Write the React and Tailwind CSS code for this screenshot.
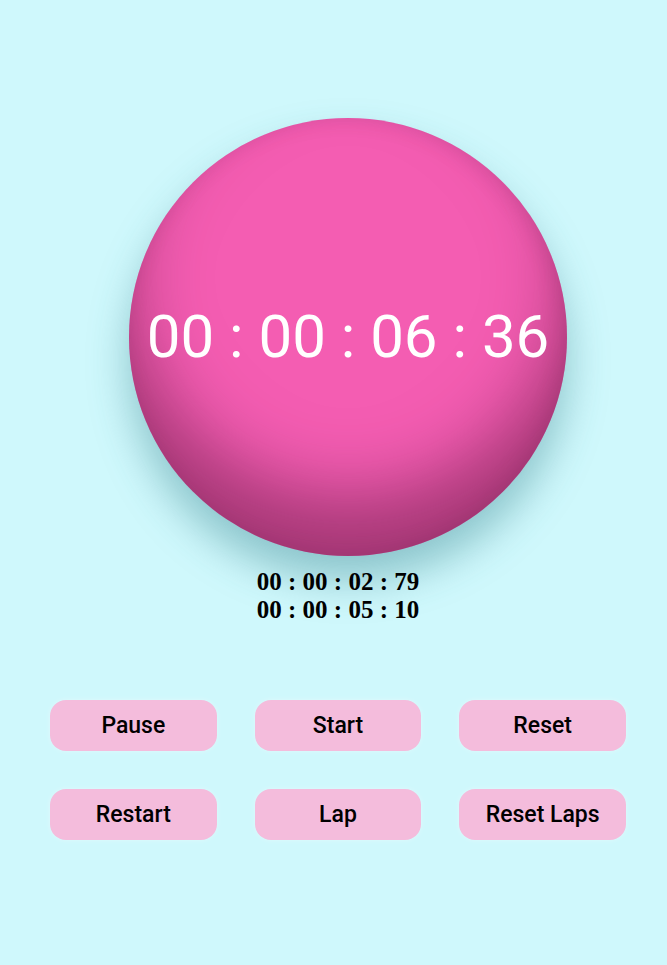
export default function App() {
  const laps = ['00 : 00 : 02 : 79', '00 : 00 : 05 : 10'];
  const buttons = ['Pause', 'Start', 'Reset', 'Restart', 'Lap', 'Reset Laps'];

  return (
    <div className="min-h-[965px] w-full bg-[#cff8fc] font-['Roboto',sans-serif]">
      <div className="flex flex-col items-center pt-[118px]">
        <div className="ml-[29px] flex h-[438px] w-[438px] items-center justify-center rounded-full bg-[#f45db2] shadow-[inset_0_-60px_70px_rgba(90,20,60,0.5),inset_-4px_0_20px_rgba(90,20,60,0.15),0_24px_40px_rgba(40,120,130,0.4)]">
          <span className="text-[60px] leading-none text-white">00 : 00 : 06 : 36</span>
        </div>

        <div className="mt-[12px] ml-[9px] flex flex-col items-center font-['Liberation_Serif',serif] text-[25px] font-bold text-black">
          {laps.map((lap) => (
            <p key={lap} className="leading-[28px]">{lap}</p>
          ))}
        </div>
      </div>

      <div className="mt-[76px] grid grid-cols-3 gap-x-[38px] gap-y-[38px] pl-[50px] pr-[41px]">
        {buttons.map((label) => (
          <button
            key={label}
            type="button"
            className="h-[51px] rounded-2xl bg-[#f4bcdc] pt-[2px] text-[23px] font-medium text-black shadow-[0_0_5px_rgba(255,255,255,0.35)]"
          >
            {label}
          </button>
        ))}
      </div>
    </div>
  );
}
